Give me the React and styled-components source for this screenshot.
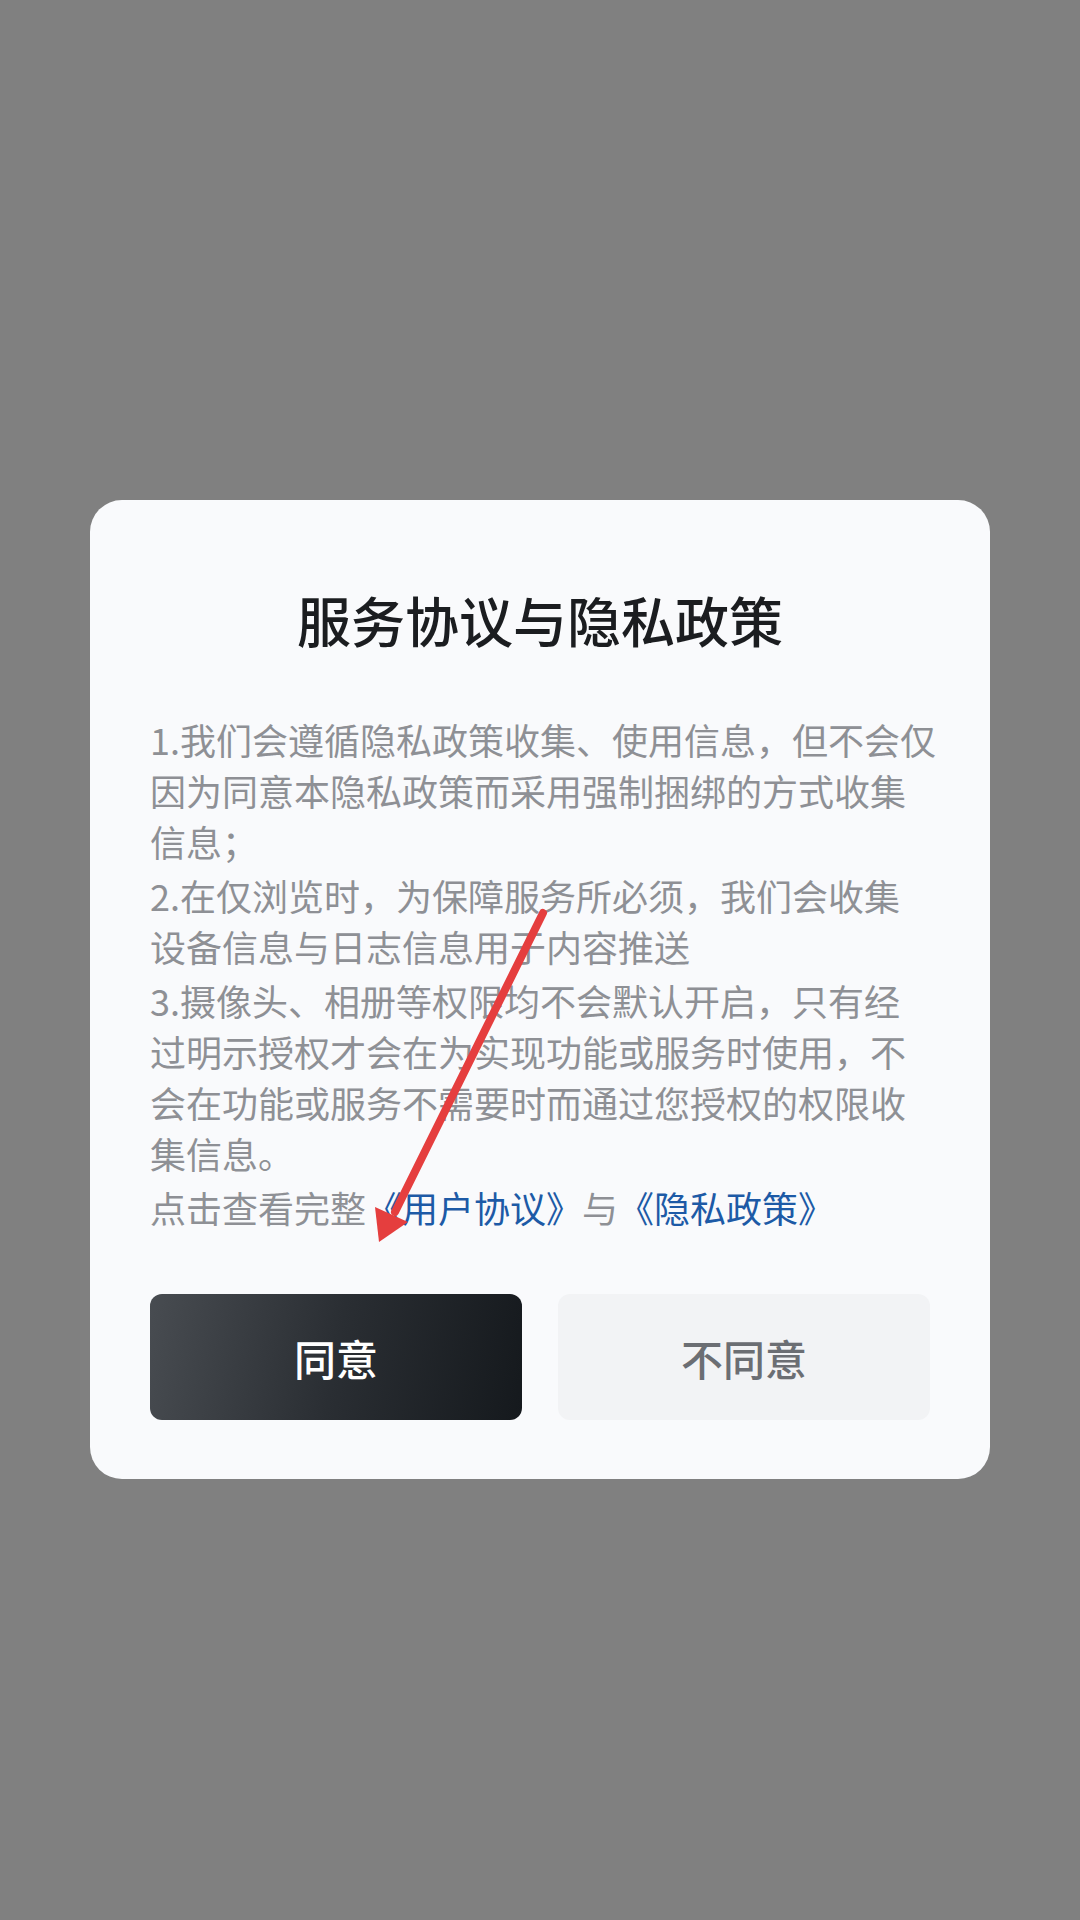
import React from 'react'
import styled, { createGlobalStyle } from 'styled-components'

const GlobalStyle = createGlobalStyle`
  html, body {
    margin: 0;
    padding: 0;
  }
  body {
    font-family: "Noto Sans CJK SC", "Noto Sans", sans-serif;
  }
`

const Page = styled.div`
  position: relative;
  width: 1080px;
  min-height: 1920px;
  box-sizing: border-box;
  padding-top: 500px;
  background-color: #808080;
  display: flex;
  justify-content: center;
  align-items: flex-start;
`

const Card = styled.div`
  width: 900px;
  box-sizing: border-box;
  padding: 78px 60px 59px;
  background-color: #f9fafc;
  border-radius: 32px;
`

const Title = styled.h1`
  margin: 0;
  font-size: 54px;
  line-height: 84px;
  font-weight: 500;
  color: #1b1d20;
  text-align: center;
`

const Body = styled.div`
  margin-top: 52px;
  font-size: 36px;
  line-height: 51px;
  color: #8e9095;
  white-space: nowrap;
`

const Para = styled.p`
  margin: 0;
  & + & {
    margin-top: 3px;
  }
`

const Link = styled.span`
  color: #1d5aa6;
`

const Buttons = styled.div`
  margin-top: 61px;
  display: grid;
  grid-template-columns: 1fr 1fr;
  gap: 36px;
`

const Button = styled.button`
  height: 126px;
  border: none;
  border-radius: 12px;
  font-family: inherit;
  font-size: 42px;
  font-weight: 500;
  cursor: pointer;
  color: ${p => (p.$primary ? '#ffffff' : '#6b6e73')};
  background: ${p => (p.$primary ? 'linear-gradient(100deg, #484c51 0%, #2a2e33 50%, #15191d 100%)' : '#f2f3f5')};
`

const Arrow = styled.svg`
  position: absolute;
  left: 0;
  top: 0;
  pointer-events: none;
`

const paragraphs = [
  ['1.我们会遵循隐私政策收集、使用信息，但不会仅', '因为同意本隐私政策而采用强制捆绑的方式收集', '信息；'],
  ['2.在仅浏览时，为保障服务所必须，我们会收集', '设备信息与日志信息用于内容推送'],
  ['3.摄像头、相册等权限均不会默认开启，只有经', '过明示授权才会在为实现功能或服务时使用，不', '会在功能或服务不需要时而通过您授权的权限收', '集信息。']
]

export default function App () {
  return (
    <>
      <GlobalStyle />
      <Page>
        <Card>
          <Title>服务协议与隐私政策</Title>
          <Body>
            {paragraphs.map((lines, i) => (
              <Para key={i}>
                {lines.map((line, j) => (
                  <React.Fragment key={j}>
                    {j > 0 && <br />}
                    {line}
                  </React.Fragment>
                ))}
              </Para>
            ))}
            <Para>
              点击查看完整<Link>《用户协议》</Link>与<Link>《隐私政策》</Link>
            </Para>
          </Body>
          <Buttons>
            <Button $primary>同意</Button>
            <Button>不同意</Button>
          </Buttons>
        </Card>
        <Arrow width='1080' height='1920' viewBox='0 0 1080 1920'>
          <line x1='543' y1='913' x2='395' y2='1212' stroke='#e53e3e' strokeWidth='8' strokeLinecap='round' />
          <polygon points='379,1242 375,1207 408,1222' fill='#e53e3e' />
        </Arrow>
      </Page>
    </>
  )
}
